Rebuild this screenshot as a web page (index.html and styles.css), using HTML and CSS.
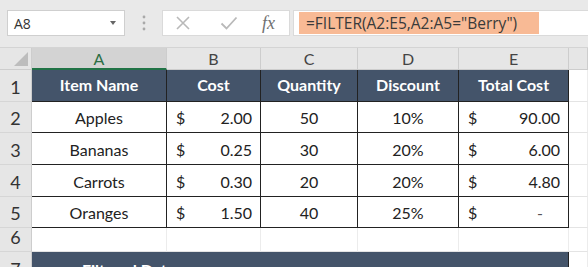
FILE: index.html
```html
<!DOCTYPE html>
<html lang="en">
<head>
    <meta charset="UTF-8">
    <meta name="viewport" content="width=device-width, initial-scale=1.0">
    <title>FILTER example</title>
    <link rel="stylesheet" href="styles.css">
</head>
<body>

<div class="toolbar">
    <div class="namebox">
        <span class="cell-ref">A8</span>
        <span class="caret"></span>
    </div>
    <div class="grip">
        <svg width="4" height="16" viewBox="0 0 4 16">
            <circle cx="2" cy="2" r="1.4" fill="#a9a9a9"/>
            <circle cx="2" cy="8" r="1.4" fill="#a9a9a9"/>
            <circle cx="2" cy="14" r="1.4" fill="#a9a9a9"/>
        </svg>
    </div>
    <div class="fx-buttons">
        <svg class="btn-icon" width="16" height="16" viewBox="0 0 16 16">
            <path d="M2 2 L14 14 M14 2 L2 14" stroke="#b9b9b9" stroke-width="1.6" fill="none"/>
        </svg>
        <svg class="btn-icon" width="18" height="16" viewBox="0 0 18 16">
            <path d="M1.5 8.5 L6.5 13.5 L16.5 2.5" stroke="#b9b9b9" stroke-width="1.8" fill="none"/>
        </svg>
        <span class="fx">fx</span>
    </div>
    <div class="formula">
        <span class="highlight">=FILTER(A2:E5,A2:A5="Berry")</span>
    </div>
</div>

<div class="sheet">
    <!-- column headers -->
    <div class="corner"><span class="corner-mark"></span></div>
    <div class="col-head selected">A</div>
    <div class="col-head">B</div>
    <div class="col-head">C</div>
    <div class="col-head">D</div>
    <div class="col-head">E</div>
    <div class="col-head"></div>

    <!-- row 1 -->
    <div class="row-head">1</div>
    <div class="cell title">Item Name</div>
    <div class="cell title">Cost</div>
    <div class="cell title">Quantity</div>
    <div class="cell title">Discount</div>
    <div class="cell title">Total Cost</div>
    <div class="blank"></div>

    <!-- row 2 -->
    <div class="row-head">2</div>
    <div class="cell center">Apples</div>
    <div class="cell money"><span>$</span><span>2.00</span></div>
    <div class="cell center">50</div>
    <div class="cell center">10%</div>
    <div class="cell money"><span>$</span><span>90.00</span></div>
    <div class="blank"></div>

    <!-- row 3 -->
    <div class="row-head">3</div>
    <div class="cell center">Bananas</div>
    <div class="cell money"><span>$</span><span>0.25</span></div>
    <div class="cell center">30</div>
    <div class="cell center">20%</div>
    <div class="cell money"><span>$</span><span>6.00</span></div>
    <div class="blank"></div>

    <!-- row 4 -->
    <div class="row-head">4</div>
    <div class="cell center">Carrots</div>
    <div class="cell money"><span>$</span><span>0.30</span></div>
    <div class="cell center">20</div>
    <div class="cell center">20%</div>
    <div class="cell money"><span>$</span><span>4.80</span></div>
    <div class="blank"></div>

    <!-- row 5 -->
    <div class="row-head">5</div>
    <div class="cell center">Oranges</div>
    <div class="cell money"><span>$</span><span>1.50</span></div>
    <div class="cell center">40</div>
    <div class="cell center">25%</div>
    <div class="cell money"><span>$</span><span class="dash">-</span></div>
    <div class="blank"></div>

    <!-- row 6 -->
    <div class="row-head">6</div>
    <div class="blank"></div>
    <div class="blank"></div>
    <div class="blank"></div>
    <div class="blank"></div>
    <div class="blank"></div>
    <div class="blank"></div>

    <!-- row 7 -->
    <div class="row-head">7</div>
    <div class="cell title merged">Filtered Data</div>
    <div class="blank"></div>
</div>

</body>
</html>
```

FILE: styles.css
```css
body {
    margin: 0;
    background-color: #ffffff;
    font-family: "Lato", "Open Sans", sans-serif;
    color: #222222;
    overflow: hidden;
}

/* formula bar */
.toolbar {
    display: flex;
    height: 48px;
    box-sizing: border-box;
    padding: 10px 0 0 7px;
    background-color: #e9e9e9;
    border-bottom: 1px solid #d4d4d4;
}
.namebox {
    display: flex;
    align-items: center;
    justify-content: space-between;
    width: 118px;
    height: 26px;
    box-sizing: border-box;
    padding: 0 8px 0 6px;
    background-color: #ffffff;
    border: 1px solid #cfcfcf;
}
.cell-ref {
    font-family: "Open Sans", sans-serif;
    font-size: 14px;
    color: #333333;
}
.caret {
    width: 0;
    height: 0;
    border-left: 3px solid transparent;
    border-right: 3px solid transparent;
    border-top: 4px solid #666666;
}
.grip {
    display: flex;
    justify-content: center;
    align-items: center;
    width: 37px;
    height: 26px;
}
.fx-buttons {
    display: flex;
    align-items: center;
    width: 128px;
    height: 26px;
    box-sizing: border-box;
    padding-left: 12px;
    background-color: #ffffff;
    border: 1px solid #dadada;
}
.btn-icon {
    margin-right: 29px;
}
.btn-icon + .btn-icon {
    margin-right: 24px;
}
.fx {
    font-family: "Liberation Serif", serif;
    font-style: italic;
    font-size: 18px;
    color: #707070;
}
.formula {
    flex: 1;
    display: flex;
    align-items: center;
    height: 26px;
    box-sizing: border-box;
    margin-left: 3px;
    padding-left: 5px;
    background-color: #ffffff;
    border: 1px solid #dadada;
    border-right: none;
}
.highlight {
    display: inline-block;
    width: 240px;
    height: 22px;
    box-sizing: border-box;
    padding-left: 7px;
    line-height: 22px;
    background-color: #f8ba95;
    font-family: "Open Sans", sans-serif;
    font-size: 15.5px;
    color: #3a3a3a;
}

/* worksheet grid */
.sheet {
    display: grid;
    grid-template-columns: 32px 135px 94px 97px 101px 110px 1fr;
    grid-template-rows: 22px 32px 31px 32px 32px 31px 24px 32px;
}
.sheet > div {
    box-sizing: border-box;
}
.corner {
    position: relative;
    background-color: #e6e6e6;
    border-right: 1px solid #cdcdcd;
    border-bottom: 1px solid #cdcdcd;
}
.corner-mark {
    position: absolute;
    right: 3px;
    bottom: 3px;
    width: 0;
    height: 0;
    border-left: 14px solid transparent;
    border-bottom: 14px solid #bdbdbd;
}
.col-head {
    display: flex;
    justify-content: center;
    align-items: center;
    background-color: #e6e6e6;
    border-right: 1px solid #cdcdcd;
    border-bottom: 1px solid #cdcdcd;
    font-size: 16px;
    color: #444444;
}
.col-head.selected {
    background-color: #d3d3d3;
    border-bottom: 2px solid #217346;
    color: #2c6e44;
}
.row-head {
    display: flex;
    justify-content: center;
    align-items: flex-end;
    padding-bottom: 3px;
    background-color: #e6e6e6;
    border-right: 1px solid #cdcdcd;
    border-bottom: 1px solid #d6d6d6;
    font-size: 18px;
    color: #333333;
}
.cell {
    display: flex;
    align-items: flex-end;
    padding: 0 8px 5px;
    border-right: 1px solid #222222;
    border-bottom: 1px solid #222222;
    font-size: 16px;
    white-space: nowrap;
}
.title {
    justify-content: center;
    padding-bottom: 7px;
    background-color: #44546a;
    color: #ffffff;
    font-weight: bold;
}
.center {
    justify-content: center;
}
.money {
    justify-content: space-between;
    padding-left: 9px;
}
.dash {
    padding-right: 17px;
    color: #555555;
}
.merged {
    grid-column: 2 / 7;
    justify-content: flex-start;
    align-items: flex-start;
    padding: 8px 0 0 50px;
}
.blank {
    background-color: #ffffff;
    border-right: 1px solid #ececec;
    border-bottom: 1px solid #e4e4e4;
}
```
